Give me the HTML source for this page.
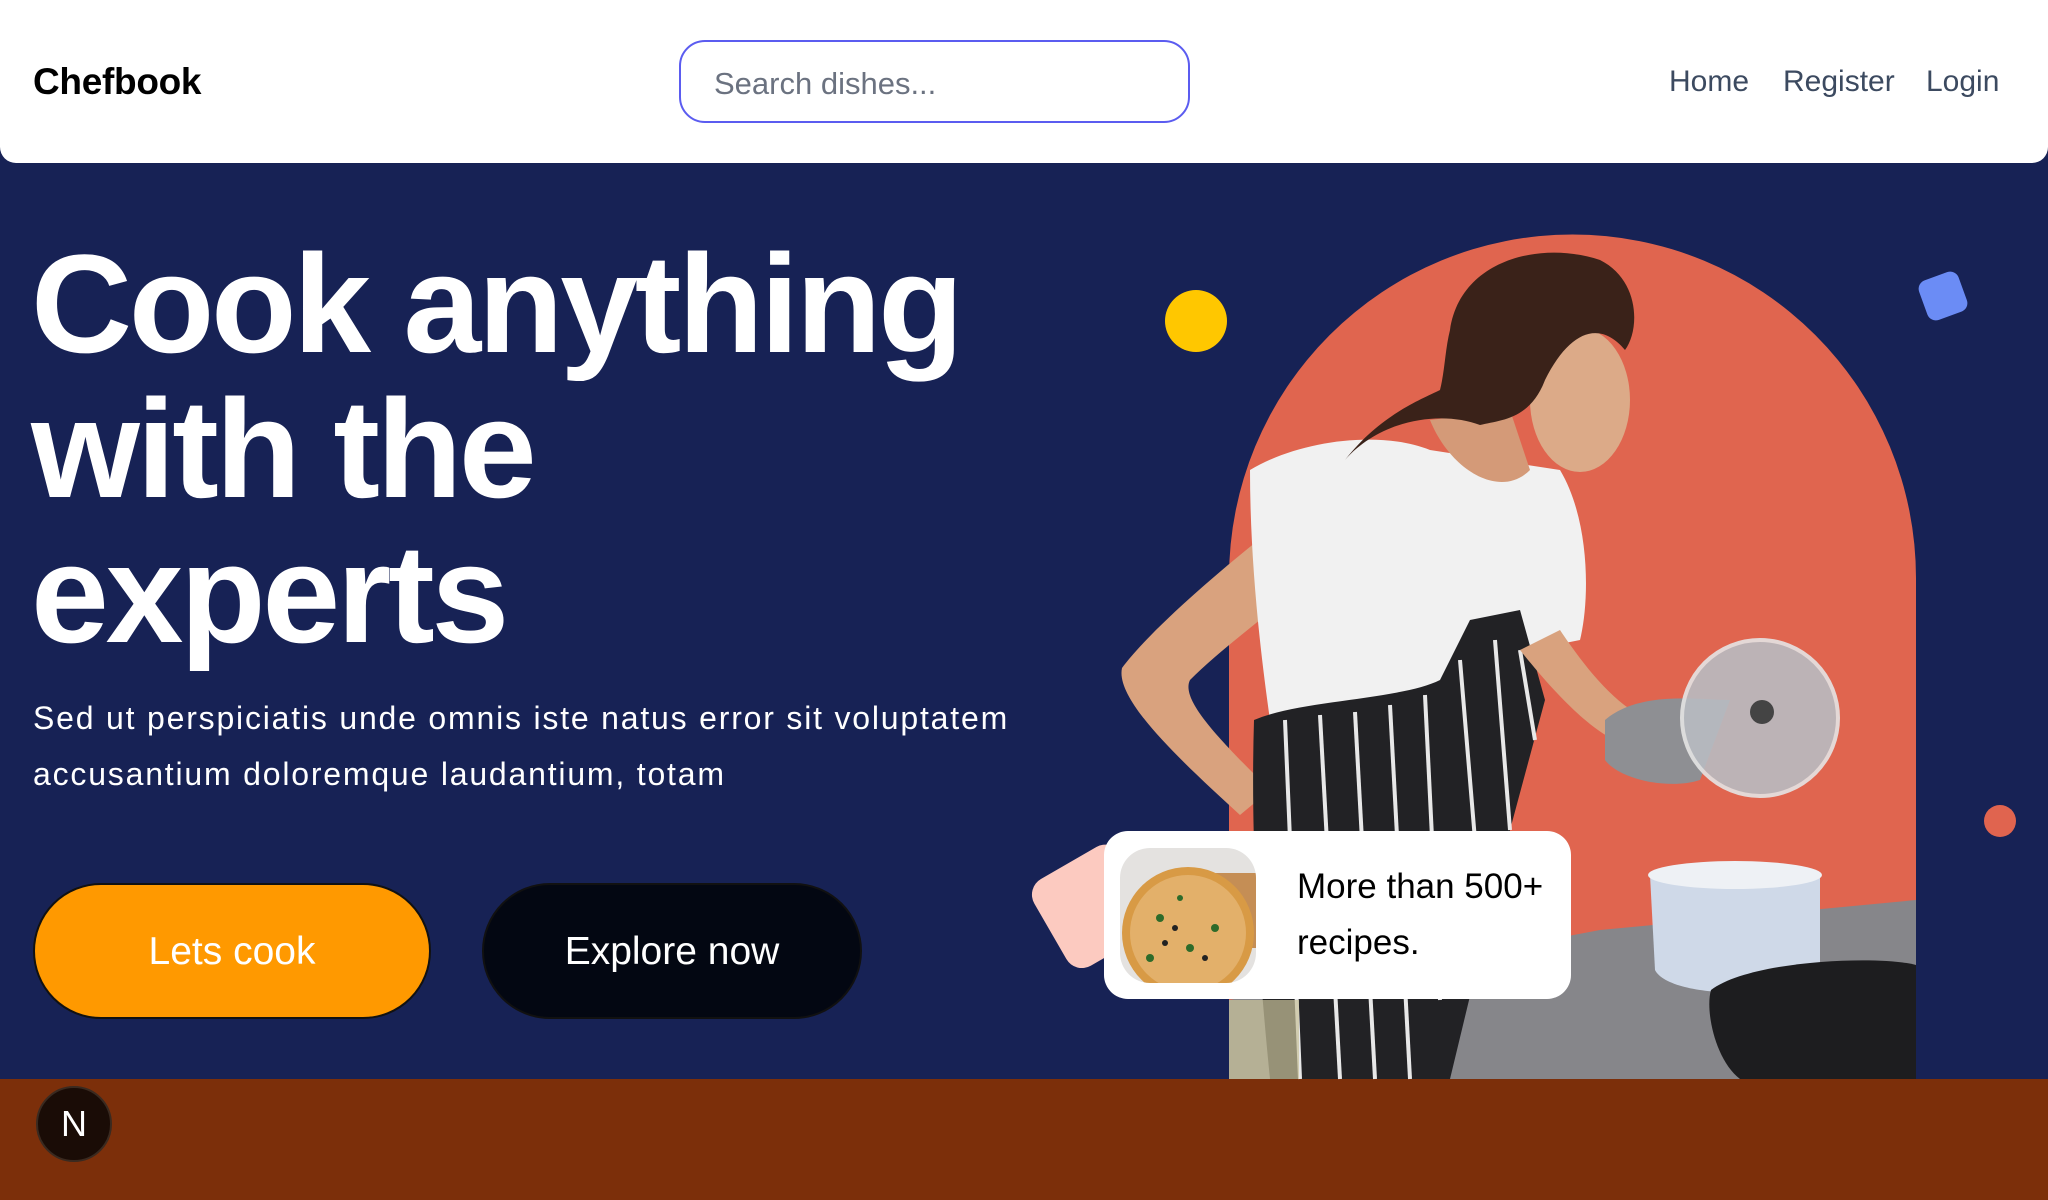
<!DOCTYPE html>
<html><head><meta charset="utf-8"><style>
*{margin:0;padding:0;box-sizing:border-box}
body{width:2048px;height:1200px;overflow:hidden;background:#7c2f0a;font-family:"Liberation Sans",sans-serif;position:relative}
.hero{position:absolute;left:0;top:0;width:2048px;height:1079px;background:#172255}
nav{position:absolute;left:0;top:0;width:2048px;height:163px;background:#fff;border-radius:0 0 16px 16px;z-index:5}
.logo{position:absolute;left:33px;top:61px;font-size:37px;font-weight:bold;color:#000;letter-spacing:-0.3px}
.search{position:absolute;left:679px;top:40px;width:511px;height:83px;border:2px solid #5b5cf0;border-radius:26px;font-size:31px;color:#6b7280;padding:24px 0 0 33px}
.links{position:absolute;top:65px;font-size:30px;color:#3c4a60}
h1{position:absolute;left:31px;top:231px;font-size:140px;line-height:145px;color:#fff;font-weight:bold;letter-spacing:-3.3px}
p.sub{position:absolute;left:33px;top:690px;width:1100px;font-size:32px;line-height:56px;color:#fff;letter-spacing:1.8px}
.btn{position:absolute;top:883px;height:136px;border-radius:68px;font-size:39px;color:#fff;text-align:center;line-height:134px;border:2px solid #111}
</style></head><body>
<div class="hero"></div>
<nav>
<div class="logo">Chefbook</div>
<div class="search">Search dishes...</div>
<div class="links" style="left:1669px">Home</div>
<div class="links" style="left:1783px">Register</div>
<div class="links" style="left:1926px">Login</div>
</nav>
<h1>Cook anything<br>with the<br>experts</h1>
<p class="sub">Sed ut perspiciatis unde omnis iste natus error sit voluptatem accusantium doloremque laudantium, totam</p>
<div class="btn" style="left:33px;width:398px;background:#ff9900">Lets cook</div>
<div class="btn" style="left:482px;width:380px;background:#030712">Explore now</div>

<svg style="position:absolute;left:0;top:0" width="2048" height="1200">
<circle cx="1196" cy="321" r="31" fill="#ffc700"/>
<rect x="1922" y="275" width="42" height="42" rx="9" fill="#6b8cf5" transform="rotate(-20 1943 296)"/>
<circle cx="2000" cy="821" r="16" fill="#e0644f"/>
<path d="M1229 1079 V578 A343 343 0 0 1 1916 578 V1079 Z" fill="#e0654f"/>
<rect x="1050" y="860" width="100" height="100" rx="18" fill="#fccac0" transform="rotate(-30 1090 920)"/>
<!-- counter -->
<path d="M1229 1000 L1600 930 L1916 900 V1079 H1229 Z" fill="#86868a"/>
<!-- left arm -->
<path d="M1310 500 C1230 560 1150 630 1122 668 C1115 700 1180 760 1240 815 L1270 790 C1220 740 1180 700 1190 680 C1230 640 1290 600 1330 560 Z" fill="#d9a27e"/>
<!-- shirt -->
<path d="M1250 470 C1300 440 1380 430 1430 450 L1560 470 C1590 520 1590 600 1580 640 L1530 650 L1520 700 L1270 720 C1260 650 1250 560 1250 470 Z" fill="#f1f1f1"/>
<!-- apron -->
<path d="M1254 720 C1300 700 1400 700 1440 680 L1470 620 L1520 610 L1545 700 L1510 830 L1450 1079 H1270 C1260 980 1250 850 1254 720 Z" fill="#222225"/>
<g stroke="#e8e8e8" stroke-width="4">
<line x1="1285" y1="720" x2="1300" y2="1079"/><line x1="1320" y1="715" x2="1340" y2="1079"/>
<line x1="1355" y1="712" x2="1375" y2="1079"/><line x1="1390" y1="705" x2="1410" y2="1079"/>
<line x1="1425" y1="695" x2="1440" y2="1000"/><line x1="1460" y1="660" x2="1480" y2="900"/>
<line x1="1495" y1="640" x2="1510" y2="830"/><line x1="1520" y1="650" x2="1535" y2="740"/>
</g>
<!-- neck/face -->
<path d="M1430 420 C1450 470 1500 500 1530 470 L1510 410 Z" fill="#d49a78"/>
<ellipse cx="1580" cy="400" rx="50" ry="72" fill="#dcaa88"/>
<!-- hair -->
<path d="M1450 330 C1460 260 1540 240 1600 260 C1640 280 1640 330 1625 350 C1600 320 1570 330 1545 380 C1530 420 1500 420 1480 425 C1440 410 1380 420 1345 460 C1380 415 1420 400 1440 390 C1445 370 1445 350 1450 330 Z" fill="#3a2219"/>
<!-- right arm + mitt -->
<path d="M1520 650 C1560 700 1600 740 1630 745 L1640 715 C1610 700 1580 660 1560 630 Z" fill="#d9a27e"/>
<path d="M1605 720 C1640 690 1700 700 1730 700 L1700 780 C1670 790 1620 780 1605 760 Z" fill="#8e8f93"/>
<circle cx="1760" cy="718" r="78" fill="#b9bcc2" stroke="#e5e5e5" stroke-width="4" opacity="0.9"/>
<circle cx="1762" cy="712" r="12" fill="#444"/>
<!-- pot -->
<path d="M1650 875 H1820 V970 C1800 1000 1670 1000 1655 970 Z" fill="#cfd9e8"/>
<ellipse cx="1735" cy="875" rx="87" ry="14" fill="#eef1f5"/>
<!-- pan -->
<path d="M1711 990 C1750 960 1880 955 1916 965 V1079 H1740 C1715 1060 1705 1010 1711 990 Z" fill="#1d1d1f"/>
<rect x="1229" y="1000" width="70" height="79" fill="#c9c29a" opacity="0.7"/>
<circle cx="74" cy="1124" r="37" fill="#1a0c06" stroke="#3a2a20" stroke-width="2"/>
</svg>
<div style="position:absolute;left:1104px;top:831px;width:467px;height:168px;background:#fff;border-radius:24px"></div>
<svg style="position:absolute;left:1120px;top:848px" width="136" height="135">
<defs><clipPath id="c"><rect width="136" height="135" rx="30"/></clipPath></defs>
<g clip-path="url(#c)"><rect width="136" height="135" fill="#e4e2e0"/>
<rect x="90" y="25" width="60" height="75" fill="#c58e55"/>
<circle cx="68" cy="85" r="66" fill="#d89a45"/><circle cx="68" cy="85" r="58" fill="#e3b06a"/>
<g fill="#2e6b2a"><circle cx="40" cy="70" r="4"/><circle cx="70" cy="100" r="4"/><circle cx="95" cy="80" r="4"/><circle cx="60" cy="50" r="3"/><circle cx="30" cy="110" r="4"/></g>
<g fill="#222"><circle cx="55" cy="80" r="3"/><circle cx="85" cy="110" r="3"/><circle cx="45" cy="95" r="3"/></g></g>
</svg>
<div style="position:absolute;left:1297px;top:859px;font-size:35px;line-height:56px;color:#000">More than 500+<br>recipes.</div>
<div style="position:absolute;left:54px;top:1103px;width:40px;font-size:36px;color:#fff;text-align:center">N</div>
</body></html>
